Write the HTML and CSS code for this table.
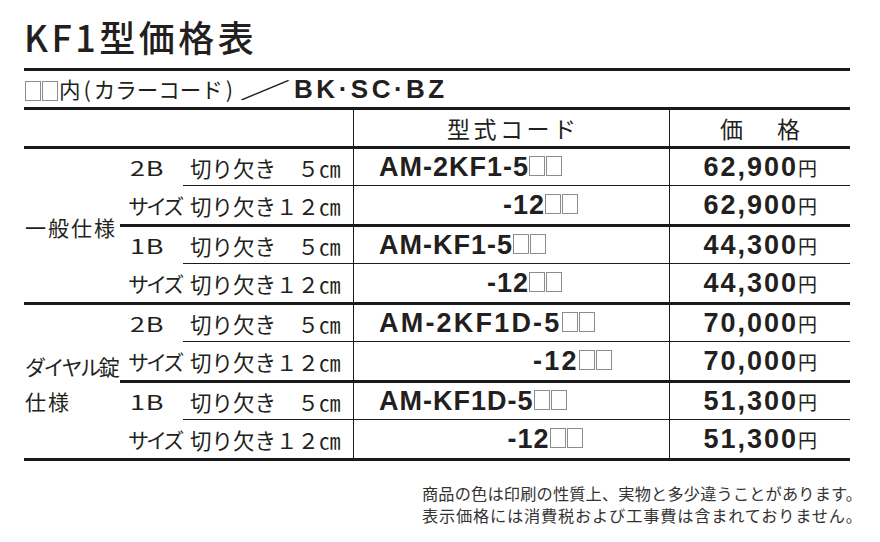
FILE: index.html
```html
<!DOCTYPE html>
<html lang="ja">
<head>
<meta charset="utf-8">
<title>KF1型価格表</title>
<link rel="stylesheet" href="styles.css">
</head>
<body>
<div class="page">
  <h1 class="title">KF1型価格表</h1>
  <div class="legend"><span class="legend-in"><i class="box"></i><i class="box"></i>内<span class="paren">(</span>カラーコード<span class="paren">)</span><span class="slash">／</span><b class="colors">BK·SC·BZ</b></span></div>
  <div class="grid">
    <div class="hd hd-blank"></div>
    <div class="hd hd-code">型式コード</div>
    <div class="hd hd-price">価　格</div>

    <div class="spec t3"><span>一般仕様</span></div>
    <div class="size t3"><span><span class="wide">2B</span></span><span class="kata">サイズ</span></div>
    <div class="cut t3">切り欠き　5㎝</div>
    <div class="code t3"><span>AM-2KF1-5<i class="box"></i><i class="box"></i></span></div>
    <div class="price t3"><span>62,900<span class="yen">円</span></span></div>

    <div class="cut t1">切り欠き12㎝</div>
    <div class="code t1"><span><span class="ghost">AM-2KF1</span>-12<i class="box"></i><i class="box"></i></span></div>
    <div class="price t1"><span>62,900<span class="yen">円</span></span></div>

    <div class="size t3"><span><span class="wide">1B</span></span><span class="kata">サイズ</span></div>
    <div class="cut t3">切り欠き　5㎝</div>
    <div class="code t3"><span>AM-KF1-5<i class="box"></i><i class="box"></i></span></div>
    <div class="price t3"><span>44,300<span class="yen">円</span></span></div>

    <div class="cut t1">切り欠き12㎝</div>
    <div class="code t1"><span><span class="ghost">AM-KF1</span>-12<i class="box"></i><i class="box"></i></span></div>
    <div class="price t1"><span>44,300<span class="yen">円</span></span></div>

    <div class="spec t3"><span class="narrow">ダイヤル錠</span><span>仕様</span></div>
    <div class="size t3"><span><span class="wide">2B</span></span><span class="kata">サイズ</span></div>
    <div class="cut t3">切り欠き　5㎝</div>
    <div class="code t3 loose"><span>AM-2KF1D-5<i class="box"></i><i class="box"></i></span></div>
    <div class="price t3"><span>70,000<span class="yen">円</span></span></div>

    <div class="cut t1">切り欠き12㎝</div>
    <div class="code t1 loose"><span><span class="ghost">AM-2KF1D</span>-12<i class="box"></i><i class="box"></i></span></div>
    <div class="price t1"><span>70,000<span class="yen">円</span></span></div>

    <div class="size t3"><span><span class="wide">1B</span></span><span class="kata">サイズ</span></div>
    <div class="cut t3">切り欠き　5㎝</div>
    <div class="code t3"><span>AM-KF1D-5<i class="box"></i><i class="box"></i></span></div>
    <div class="price t3"><span>51,300<span class="yen">円</span></span></div>

    <div class="cut t1">切り欠き12㎝</div>
    <div class="code t1"><span><span class="ghost">AM-KF1D</span>-12<i class="box"></i><i class="box"></i></span></div>
    <div class="price t1"><span>51,300<span class="yen">円</span></span></div>
  </div>
  <div class="notes">
    <p>商品の色は印刷の性質上、実物と多少違うことがあります。</p>
    <p>表示価格には消費税および工事費は含まれておりません。</p>
  </div>
</div>
</body>
</html>
```

FILE: styles.css
```css
* { box-sizing: border-box; margin: 0; padding: 0; }
html, body { background: #fff; }
body {
  width: 880px;
  height: 542px;
  overflow: hidden;
  color: #231f20;
  font-family: "Noto Sans CJK JP", "Noto Sans", sans-serif;
}
.page { width: 880px; padding-left: 24px; }

.title {
  height: 68px;
  padding-top: 15px;
  font-size: 36px;
  line-height: 42px;
  font-weight: 500;
  letter-spacing: 3.5px;
}

.legend {
  width: 826px;
  height: 39px;
  border-top: 3px solid #1a1a1a;
  display: flex;
  align-items: center;
  padding-left: 1px;
  font-size: 21.5px;
}
.box {
  display: inline-block;
  border: 1px solid #8c8c8c;
  vertical-align: baseline;
}
.legend .box { width: 16px; height: 20px; margin-right: 1px; vertical-align: -3px; }
.paren { margin: 0 3px; }
.slash {
  display: inline-block;
  width: 58px;
  text-align: center;
  font-weight: 700;
  transform: scaleX(2.4);
}
.colors {
  font-family: "Liberation Sans", Arial, sans-serif;
  font-weight: 700;
  font-size: 26px;
  letter-spacing: 3.5px;
}

.grid {
  width: 826px;
  display: grid;
  grid-template-columns: 96px 63px 171px 316px 180px;
  grid-template-rows: repeat(9, 39px);
  border-bottom: 3px solid #1a1a1a;
}
.t3 { border-top: 3px solid #1a1a1a; }
.t1 { border-top: 1px solid #1a1a1a; }

.hd {
  border-top: 3px solid #1a1a1a;
  display: flex;
  align-items: center;
  justify-content: center;
  font-size: 23px;
}
.hd-blank { grid-column: 1 / 4; border-right: 1px solid #1a1a1a; }
.hd-code { grid-column: 4; border-right: 1px solid #1a1a1a; letter-spacing: 3.5px; padding-left: 3.5px; }
.hd-price { grid-column: 5; letter-spacing: 5.5px; padding-left: 5.5px; }

.spec {
  grid-column: 1;
  grid-row: span 4;
  display: flex;
  flex-direction: column;
  justify-content: center;
  padding-left: 1px;
  padding-top: 4px;
  font-size: 21px;
  line-height: 35px;
  letter-spacing: 2px;
}
.spec .narrow { letter-spacing: -2.4px; }

.size {
  grid-column: 2;
  grid-row: span 2;
  display: grid;
  grid-template-rows: 1fr 1fr;
  padding-left: 8px;
  font-size: 21px;
}
.size > span { display: flex; align-items: center; }
.wide {
  display: inline-block;
  font-size: 20px;
  letter-spacing: 0.5px;
  transform: scaleX(1.35);
  transform-origin: left center;
  margin-left: 2px;
}
.kata { letter-spacing: -3px; }

.cut {
  grid-column: 3;
  border-right: 1px solid #1a1a1a;
  display: flex;
  align-items: center;
  padding-left: 7px;
  font-size: 21.5px;
  font-feature-settings: "fwid";
}

.code {
  grid-column: 4;
  border-right: 1px solid #1a1a1a;
  display: flex;
  align-items: center;
  padding-left: 25px;
  font-family: "Liberation Sans", Arial, sans-serif;
  font-weight: 700;
  font-size: 27px;
  letter-spacing: 1px;
}
.code.loose { letter-spacing: 2.2px; }
.code .box { width: 16px; height: 20px; margin-right: 1px; }
.ghost { visibility: hidden; }

.price {
  grid-column: 5;
  display: flex;
  align-items: center;
  justify-content: flex-end;
  padding-right: 33px;
  font-family: "Liberation Sans", Arial, sans-serif;
  font-weight: 700;
  font-size: 27px;
  letter-spacing: 2px;
}
.yen {
  font-family: "Noto Sans CJK JP", sans-serif;
  font-weight: 400;
  font-size: 19px;
  letter-spacing: 0;
}

.notes {
  width: 440px;
  margin: 21px 0 0 398px;
  font-size: 16.2px;
  line-height: 22px;
  color: #333;
}
.notes p {
  text-align: justify;
  text-align-last: justify;
}
```
